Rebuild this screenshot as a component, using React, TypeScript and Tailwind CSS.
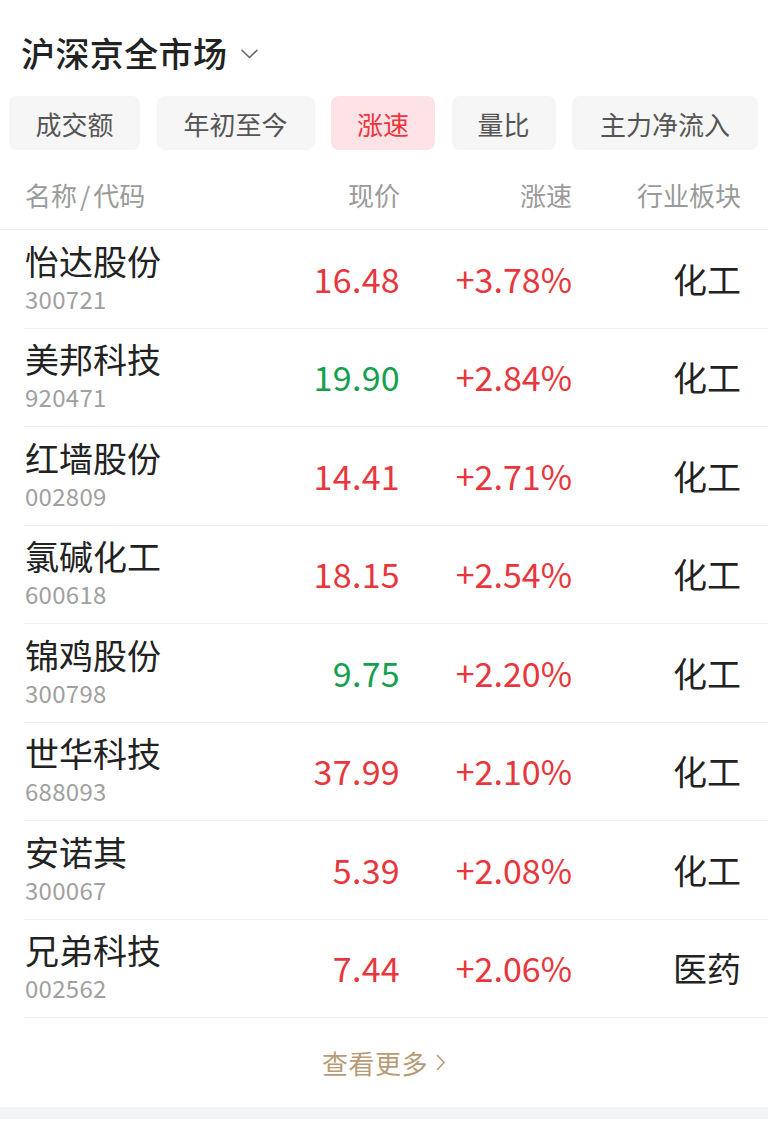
import React from "react";

const rows = [
  { name: "怡达股份", code: "300721", price: "16.48", pc: "up", chg: "+3.78%", ind: "化工" },
  { name: "美邦科技", code: "920471", price: "19.90", pc: "down", chg: "+2.84%", ind: "化工" },
  { name: "红墙股份", code: "002809", price: "14.41", pc: "up", chg: "+2.71%", ind: "化工" },
  { name: "氯碱化工", code: "600618", price: "18.15", pc: "up", chg: "+2.54%", ind: "化工" },
  { name: "锦鸡股份", code: "300798", price: "9.75", pc: "down", chg: "+2.20%", ind: "化工" },
  { name: "世华科技", code: "688093", price: "37.99", pc: "up", chg: "+2.10%", ind: "化工" },
  { name: "安诺其", code: "300067", price: "5.39", pc: "up", chg: "+2.08%", ind: "化工" },
  { name: "兄弟科技", code: "002562", price: "7.44", pc: "up", chg: "+2.06%", ind: "医药" },
];

const tabs = [
  { label: "成交额", w: "w-[131px]", active: false },
  { label: "年初至今", w: "w-[158px]", active: false },
  { label: "涨速", w: "w-[104px]", active: true },
  { label: "量比", w: "w-[104px]", active: false },
  { label: "主力净流入", w: "w-[186px]", active: false },
];

export default function App() {
  return (
    <div
      className="w-[768px] h-[1143px] bg-white overflow-hidden"
      style={{ fontFamily: '"Noto Sans CJK SC", "Noto Sans", sans-serif' }}
    >
      {/* Title */}
      <div className="pt-[33px] pl-[21px] flex items-center h-[73px]">
        <span className="text-[34px] leading-[40px] font-medium text-[#222222] tracking-[0.4px]">
          沪深京全市场
        </span>
        <svg className="ml-[14px] mt-[2px]" width="17" height="10" viewBox="0 0 17 10" fill="none">
          <path d="M1 1.2L8.5 8.5L16 1.2" stroke="#666666" strokeWidth="1.6" strokeLinecap="round" strokeLinejoin="round" />
        </svg>
      </div>

      {/* Tabs */}
      <div className="mt-[23px] pl-[9px] pr-[10px] flex justify-between">
        {tabs.map((t) => (
          <div
            key={t.label}
            className={`${t.w} h-[54px] rounded-[8px] flex items-center justify-center text-[26px] ${
              t.active ? "bg-[#fde3e5] text-[#f0343d]" : "bg-[#f6f6f6] text-[#555555]"
            }`}
          >
            {t.label}
          </div>
        ))}
      </div>

      {/* Header */}
      <div className="h-[80px] pt-[10px] flex items-center pl-[25px] pr-[27px] text-[26px] text-[#9a9a9a] border-b border-[#f2f2f2]">
        <div className="flex-1">
          名称<span className="mx-[3px]">/</span>代码
        </div>
        <div className="w-[150px] text-right">现价</div>
        <div className="w-[172px] text-right">涨速</div>
        <div className="w-[169px] text-right">行业板块</div>
      </div>

      {/* Rows */}
      <div className="ml-[24px]">
        {rows.map((r) => (
          <div
            key={r.code}
            className="h-[98.5px] flex items-center pl-[1px] pr-[27px] border-b border-[#f2f2f2]"
          >
            <div className="flex-1 flex flex-col -mt-[2px]">
              <div className="text-[34px] leading-[36px] text-[#222222]">{r.name}</div>
              <div className="mt-[6px] text-[24px] leading-[28px] text-[#a0a0a0] tracking-[0.3px]">{r.code}</div>
            </div>
            <div
              className={`w-[150px] text-right text-[34px] leading-[40px] tracking-[0.3px] ${
                r.pc === "up" ? "text-[#e8363d]" : "text-[#15a04e]"
              }`}
            >
              {r.price}
            </div>
            <div className="w-[172px] text-right text-[34px] leading-[40px] text-[#e8363d]">{r.chg}</div>
            <div className="w-[169px] text-right text-[34px] leading-[40px] text-[#222222]">{r.ind}</div>
          </div>
        ))}
      </div>

      {/* More */}
      <div className="h-[89px] flex items-center justify-center">
        <span className="text-[26px] text-[#b89b76] tracking-[0.5px]">查看更多</span>
        <svg className="ml-[8px]" width="10" height="17" viewBox="0 0 10 17" fill="none">
          <path d="M1.5 1.5L8 8.5L1.5 15.5" stroke="#b89b76" strokeWidth="1.6" strokeLinecap="round" strokeLinejoin="round" />
        </svg>
      </div>

      <div className="h-[12px] bg-[#f1f3f5]" />
    </div>
  );
}
